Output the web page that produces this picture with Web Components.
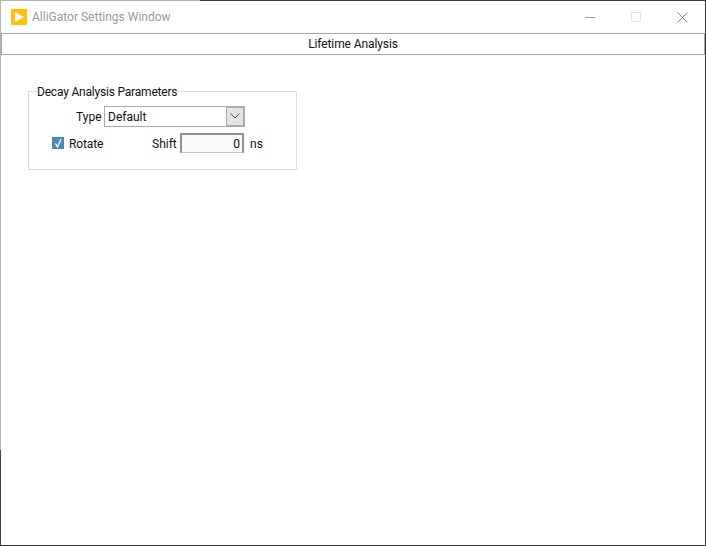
<!DOCTYPE html>
<html>
<head>
<meta charset="utf-8">
<title>AlliGator Settings Window</title>
<style>
    html, body { margin: 0; padding: 0; background: #fff; }
    body { font: 12px Roboto, "Open Sans", sans-serif; color: #111; }
    form-row > span { padding-top: 2px; }
</style>
</head>
<body>
<settings-window>
    <title-bar slot="title">AlliGator Settings Window</title-bar>
    <tab-header slot="tabs">Lifetime Analysis</tab-header>
    <group-box label="Decay Analysis Parameters">
        <form-row indent="47">
            <span style="width:28px">Type</span>
            <combo-box value="Default"></combo-box>
        </form-row>
        <form-row indent="23">
            <check-box checked style="width:100px">Rotate</check-box>
            <span style="width:28px">Shift</span>
            <num-field value="0"></num-field>
            <span style="margin-left:6px">ns</span>
        </form-row>
    </group-box>
</settings-window>

<script>
class SettingsWindow extends HTMLElement {
    constructor() {
        super();
        this.attachShadow({ mode: "open" });
        this.shadowRoot.innerHTML = `
            <style>
                :host {
                    display: flex;
                    flex-direction: column;
                    box-sizing: border-box;
                    width: 706px;
                    height: 546px;
                    padding: 1px 1px 1px 1px;
                    background:
                        linear-gradient(#b4b4b4 450px, #444 450px) left top / 1px 100% no-repeat,
                        linear-gradient(90deg, #b4b4b4 200px, #3a3a3a 200px) left top / 100% 1px no-repeat,
                        linear-gradient(#3a3a3a, #3a3a3a) right top / 1px 100% no-repeat,
                        linear-gradient(#3a3a3a, #3a3a3a) left bottom / 100% 1px no-repeat,
                        #fff;
                    overflow: hidden;
                }
                .body { flex: 1; padding: 27px 0 0 27px; }
            </style>
            <slot name="title"></slot>
            <slot name="tabs"></slot>
            <div class="body"><slot></slot></div>
        `;
    }
}

class TitleBar extends HTMLElement {
    constructor() {
        super();
        this.attachShadow({ mode: "open" });
        this.shadowRoot.innerHTML = `
            <style>
                :host {
                    display: flex;
                    align-items: center;
                    height: 32px;
                    color: #9a9a9a;
                    flex: none;
                }
                .logo { margin-left: 10px; margin-right: 5px; flex: none; }
                .text { flex: 1; }
                .btn { width: 46px; height: 32px; display: flex; align-items: center; justify-content: center; flex: none; }
            </style>
            <svg class="logo" width="16" height="16" viewBox="0 0 16 16">
                <rect width="16" height="16" rx="1" fill="#ffc107"/>
                <path d="M4 3 L13 8 L4 13 Z" fill="#fff"/>
            </svg>
            <span class="text"><slot></slot></span>
            <div class="btn"><svg width="11" height="11" viewBox="0 0 11 11"><path d="M0.5 5.5H10.5" stroke="#999" fill="none"/></svg></div>
            <div class="btn"><svg width="11" height="11" viewBox="0 0 11 11"><rect x="0.5" y="0.5" width="9" height="9" stroke="#e3e3e3" fill="none"/></svg></div>
            <div class="btn"><svg width="11" height="11" viewBox="0 0 11 11"><path d="M0.5 0.5L10.5 10.5M10.5 0.5L0.5 10.5" stroke="#8a8a8a" fill="none"/></svg></div>
        `;
    }
}

class TabHeader extends HTMLElement {
    constructor() {
        super();
        this.attachShadow({ mode: "open" });
        this.shadowRoot.innerHTML = `
            <style>
                :host {
                    display: block;
                    flex: none;
                    box-sizing: border-box;
                    height: 22px;
                    line-height: 21px;
                    text-align: center;
                    letter-spacing: -0.1px;
                    border: 1px solid #a6a6a6;
                    color: #111;
                }
            </style>
            <slot></slot>
        `;
    }
}

class GroupBox extends HTMLElement {
    constructor() {
        super();
        this.attachShadow({ mode: "open" });
        this.shadowRoot.innerHTML = `
            <style>
                :host { display: block; width: 269px; }
                fieldset {
                    box-sizing: border-box;
                    height: 88px;
                    margin: 0;
                    padding: 6px 0 0 0;
                    border: 1px solid #dcdcdc;
                    display: flex;
                    flex-direction: column;
                    gap: 7px;
                }
                legend {
                    margin-left: 8px;
                    padding: 0;
                    height: 18px;
                    line-height: 20px;
                    letter-spacing: -0.2px;
                    color: #111;
                }
            </style>
            <fieldset>
                <legend>${this.getAttribute("label")}</legend>
                <slot></slot>
            </fieldset>
        `;
    }
}

class FormRow extends HTMLElement {
    constructor() {
        super();
        this.attachShadow({ mode: "open" });
        const indent = this.getAttribute("indent") || 0;
        this.shadowRoot.innerHTML = `
            <style>
                :host {
                    display: flex;
                    align-items: center;
                    height: 20px;
                    padding-left: ${indent}px;
                }
            </style>
            <slot></slot>
        `;
    }
}

class ComboBox extends HTMLElement {
    constructor() {
        super();
        this.attachShadow({ mode: "open" });
        this.shadowRoot.innerHTML = `
            <style>
                :host {
                    display: flex;
                    align-items: center;
                    box-sizing: border-box;
                    width: 141px;
                    height: 21px;
                    border: 1px solid #a9a9a9;
                    background: #fff;
                }
                .val { flex: 1; padding: 2px 0 0 3px; }
                .arrow {
                    box-sizing: border-box;
                    width: 18px;
                    height: 19px;
                    background: #e3e3e3;
                    border: 1px solid #ababab;
                    display: flex;
                    align-items: center;
                    justify-content: center;
                }
            </style>
            <span class="val">${this.getAttribute("value")}</span>
            <div class="arrow">
                <svg width="10" height="6" viewBox="0 0 10 6"><path d="M0.5 0.5L5 5L9.5 0.5" stroke="#555" fill="none"/></svg>
            </div>
        `;
    }
}

class CheckBox extends HTMLElement {
    constructor() {
        super();
        this.attachShadow({ mode: "open" });
        this.shadowRoot.innerHTML = `
            <style>
                :host { display: flex; align-items: center; gap: 5px; box-sizing: border-box; }
                .box { width: 12px; height: 12px; background: #4a88b8; flex: none; }
                svg { display: block; }
                span { padding-top: 2px; letter-spacing: -0.1px; }
            </style>
            <div class="box">
                <svg width="12" height="12" viewBox="0 0 12 12"><path d="M3.5 6.5L5.5 10L9 2" stroke="#fff" stroke-width="1.3" fill="none"/></svg>
            </div>
            <span><slot></slot></span>
        `;
    }
}

class NumField extends HTMLElement {
    constructor() {
        super();
        this.attachShadow({ mode: "open" });
        this.shadowRoot.innerHTML = `
            <style>
                :host {
                    display: block;
                    box-sizing: border-box;
                    width: 64px;
                    height: 20px;
                    line-height: 19px;
                    text-align: right;
                    padding-right: 2px;
                    background: #f8f8f8;
                    border-style: solid;
                    border-color: #8f8f8f #8f8f8f #c4c4c4 #8f8f8f;
                    border-width: 2px 2px 1px 2px;
                }
            </style>
            ${this.getAttribute("value")}
        `;
    }
}

customElements.define("settings-window", SettingsWindow);
customElements.define("title-bar", TitleBar);
customElements.define("tab-header", TabHeader);
customElements.define("group-box", GroupBox);
customElements.define("form-row", FormRow);
customElements.define("combo-box", ComboBox);
customElements.define("check-box", CheckBox);
customElements.define("num-field", NumField);
</script>
</body>
</html>
